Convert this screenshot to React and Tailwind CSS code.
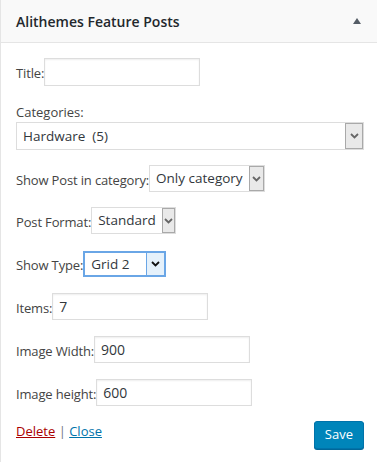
import React from "react";

function TextField({ value = "", width, height = "h-[27px]" }) {
  return (
    <div
      className={`${height} ${width} border border-[#dddddd] bg-white px-[6px] flex items-center text-[14px] text-[#32373c] shadow-[inset_0_1px_2px_rgba(0,0,0,0.07)]`}
    >
      {value}
    </div>
  );
}

function Chevron({ color = "#555" }) {
  return (
    <svg width="9" height="6" viewBox="0 0 9 6">
      <path d="M1 1 L4.5 4.5 L8 1" fill="none" stroke={color} strokeWidth="1.8" />
    </svg>
  );
}

function SelectBox({ value, width, height = "h-[27px]", focused = false }) {
  return (
    <div
      className={`${height} ${width} flex items-stretch bg-white ${
        focused ? "border-2 border-[#6aa6e6]" : "border border-[#dddddd]"
      }`}
    >
      <div className="flex-1 flex items-center px-[6px] text-[13.5px] text-[#32373c] whitespace-pre">{value}</div>
      <div
        className={`w-[18px] flex items-center justify-center ${
          focused ? "bg-[#e5f1fb] border-l border-[#6aa6e6]" : "bg-[#e9e9e9] border border-[#a9a9a9]"
        }`}
      >
        <Chevron color={focused ? "#111" : "#666"} />
      </div>
    </div>
  );
}

function Row({ label, children, className = "" }) {
  return (
    <div className={`flex items-center ${className}`}>
      <span className="pt-[4px] tracking-[-0.15px]">{label}</span>
      {children}
    </div>
  );
}

export default function App() {
  return (
    <div
      className="w-[377px] h-[462px] bg-white border-l border-[#e5e5e5] text-[13px] text-[#444] overflow-hidden"
      style={{ fontFamily: '"Open Sans", "Noto Sans", sans-serif' }}
    >
      <header className="h-[43px] bg-[#f9f9f9] border-b border-[#e5e5e5] flex items-center justify-between pl-[15px] pr-[16px]">
        <h3 className="text-[14px] font-semibold text-[#23282d]">Alithemes Feature Posts</h3>
        <svg width="8" height="6" viewBox="0 0 8 6">
          <path d="M4 0 L8 6 L0 6 Z" fill="#555d66" />
        </svg>
      </header>

      <div className="pl-[15px] pr-[13px] pt-[15px]">
        <Row label="Title:">
          <TextField width="w-[156px]" height="h-[28px]" />
        </Row>

        <div className="mt-[17px] leading-[18px]">Categories:</div>
        <div className="mt-[1px]">
          <SelectBox value="Hardware  (5)" width="w-full" height="h-[28px]" />
        </div>

        <Row label="Show Post in category:" className="mt-[15px]">
          <SelectBox value="Only category" width="w-[116px]" />
        </Row>

        <Row label="Post Format:" className="mt-[15px]">
          <SelectBox value="Standard" width="w-[85px]" />
        </Row>

        <Row label="Show Type:" className="mt-[17px]">
          <SelectBox value="Grid 2" width="w-[83px]" height="h-[26px]" focused />
        </Row>

        <Row label="Items:" className="mt-[16px]">
          <TextField value="7" width="w-[156px]" />
        </Row>

        <Row label="Image Width:" className="mt-[16px]">
          <TextField value="900" width="w-[156px]" />
        </Row>

        <Row label="Image height:" className="mt-[16px]">
          <TextField value="600" width="w-[156px]" />
        </Row>

        <div className="mt-[15px] flex items-start justify-between">
          <div className="pt-[1px]">
            <a className="text-[#aa0000] underline">Delete</a>
            <span className="text-[#72777c]"> | </span>
            <a className="text-[#0073aa] underline">Close</a>
          </div>
          <button className="h-[28px] px-[10px] rounded-[3px] bg-[#0085ba] border border-[#0073aa] shadow-[0_1px_0_#006799] text-white text-[13px]">
            Save
          </button>
        </div>
      </div>
    </div>
  );
}
